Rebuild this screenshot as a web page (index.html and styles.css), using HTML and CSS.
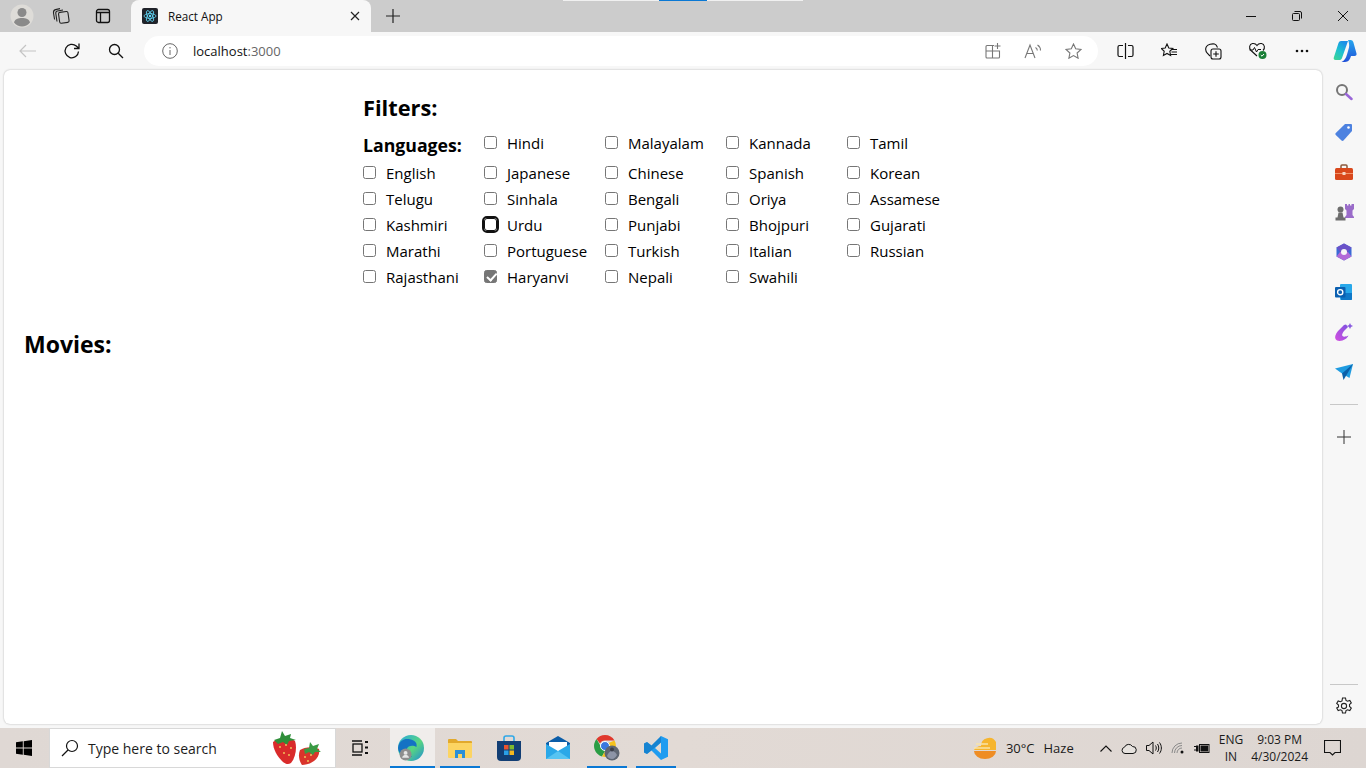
FILE: index.html
```html
<!DOCTYPE html>
<html lang="en">
<head>
    <meta charset="UTF-8">
    <meta name="viewport" content="width=device-width, initial-scale=1.0">
    <title>React App</title>
    <link rel="stylesheet" href="styles.css">
</head>
<body>
    <div class="tabstrip">
        <div class="strip-left">
            <span class="avatar">
                <svg width="24" height="24" viewBox="0 0 24 24"><circle cx="12" cy="12" r="11.500" fill="#dedcd8"/><circle cx="12" cy="8.500" r="4.500" fill="#8a8a8a"/><path d="M4 18.500c1-3.500 4-4.500 8-4.500s7 1 8 4.500c-2 2.500-5 4-8 4s-6-1.500-8-4z" fill="#8a8a8a"/></svg>
            </span>
            <span class="strip-btn">
                <svg width="18" height="18" viewBox="0 0 18 18" fill="none" stroke="#222" stroke-width="1.100"><rect x="7" y="5" width="9.500" height="11" rx="1.500" transform="rotate(-8 11 10)"/><path d="M5 14.500 3.800 6.500C3.600 5 4.300 4.200 5.500 4L11 3"/><path d="M2.600 12.500 1.500 6C1.300 4 2 3 3.500 2.600L8 1.600"/></svg>
            </span>
            <span class="strip-btn">
                <svg width="16" height="16" viewBox="0 0 16 16" fill="none" stroke="#111" stroke-width="1.300"><rect x="1.500" y="1.500" width="13" height="13" rx="2"/><path d="M5.500 4.500v10M1.500 4.500h13" /></svg>
            </span>
        </div>
        <div class="tab">
            <svg class="tab-icon" width="16" height="16" viewBox="0 0 16 16" fill="none" stroke="#61dafb" stroke-width=".8"><rect width="16" height="16" rx="2" fill="#20232a" stroke="none"/><ellipse cx="8" cy="8" rx="6" ry="2.400"/><ellipse cx="8" cy="8" rx="6" ry="2.400" transform="rotate(60 8 8)"/><ellipse cx="8" cy="8" rx="6" ry="2.400" transform="rotate(120 8 8)"/><circle cx="8" cy="8" r="1.200" fill="#61dafb" stroke="none"/></svg>
            <span class="tab-title">React App</span>
            <svg class="tab-close" width="10" height="10" viewBox="0 0 10 10" stroke="#222" stroke-width="1.200"><path d="M1 1l8 8M9 1l-8 8"/></svg>
        </div>
        <span class="new-tab">
            <svg width="14" height="14" viewBox="0 0 14 14" stroke="#222" stroke-width="1.200"><path d="M7 0v14M0 7h14"/></svg>
        </span>
        <div class="share-bar">
            <span class="share-side"></span>
            <span class="share-mid"></span>
            <span class="share-side"></span>
        </div>
        <div class="win-controls">
            <span class="win-btn"><svg width="10" height="10" viewBox="0 0 10 10" stroke="#111"><path d="M0 5.500h10"/></svg></span>
            <span class="win-btn"><svg width="10" height="10" viewBox="0 0 10 10" fill="none" stroke="#111"><rect x=".5" y="2.500" width="7" height="7" rx="1"/><path d="M2.500 .5h5.500a1.500 1.500 0 0 1 1.500 1.500v5.500"/></svg></span>
            <span class="win-btn"><svg width="10" height="10" viewBox="0 0 10 10" stroke="#111"><path d="M0 0l10 10M10 0 0 10"/></svg></span>
        </div>
    </div>

    <div class="toolbar">
        <span class="tool-btn back">
            <svg width="18" height="14" viewBox="0 0 18 14" fill="none" stroke="#c4c4c4" stroke-width="1.200"><path d="M17 7H1M7 1 1 7l6 6"/></svg>
        </span>
        <span class="tool-btn reload">
            <svg width="18" height="18" viewBox="0 0 18 18" fill="none" stroke="#111" stroke-width="1.300"><path d="M15.500 9.500a6.700 6.700 0 1 1-2.200-5.400L16 6.500M16 1.500v5h-5"/></svg>
        </span>
        <span class="tool-btn search">
            <svg width="16" height="16" viewBox="0 0 16 16" fill="none" stroke="#111" stroke-width="1.300"><circle cx="6.500" cy="6.500" r="5"/><path d="M10.200 10.200 15 15"/></svg>
        </span>
        <div class="addressbar">
            <svg class="info-icon" width="16" height="16" viewBox="0 0 16 16" fill="none" stroke="#666" stroke-width="1"><circle cx="8" cy="8" r="7.300"/><path d="M8 7v5M8 4v1.400"/></svg>
            <span class="url">localhost<span class="url-port">:3000</span></span>
            <div class="address-icons">
                <svg width="16" height="16" viewBox="0 0 16 16" fill="none" stroke="#777" stroke-width="1.100"><path d="M9 2.500H2a1 1 0 0 0-1 1V14a1 1 0 0 0 1 1h11.500a1 1 0 0 0 1-1V8H1M7.500 2.500V15M12.500 0v6M9.500 3h6"/></svg>
                <svg width="18" height="16" viewBox="0 0 18 16" fill="none" stroke="#777" stroke-width="1.100"><path d="M1 15 6 2l5 13M2.800 10.500h6.400M11.500 4.500c1.300.8 1.800 2 1.800 3M13.500 2c2 1.200 3 3.200 3 5.500"/></svg>
                <svg width="17" height="16" viewBox="0 0 17 16" fill="none" stroke="#777" stroke-width="1.100"><path d="M8.500 1l2.200 4.800 5.300.6-3.900 3.600 1 5.200-4.600-2.600L3.900 15.200l1-5.200L1 6.400l5.300-.6z"/></svg>
            </div>
        </div>
        <div class="toolbar-icons">
            <span class="tool-btn">
                <svg width="17" height="16" viewBox="0 0 17 16" fill="none" stroke="#111" stroke-width="1.200"><path d="M8.500 0v16M6 2.500H2.500a1.500 1.500 0 0 0-1.500 1.500v8a1.500 1.500 0 0 0 1.500 1.500H6M11 2.500h3.500A1.500 1.500 0 0 1 16 4v8a1.500 1.500 0 0 1-1.500 1.500H11"/></svg>
            </span>
            <span class="tool-btn">
                <svg width="17" height="16" viewBox="0 0 17 16" fill="none" stroke="#111" stroke-width="1.100"><path d="M6 1l1.800 4 4 .5-3 2.800.8 4.200L6 10.400 2.400 12.500l.8-4.200-3-2.800 4-.5zM11 6.500h5M10.500 9h5.500M9.500 11.500H16"/></svg>
            </span>
            <span class="tool-btn">
                <svg width="17" height="17" viewBox="0 0 17 17" fill="none" stroke="#111" stroke-width="1.100"><path d="M5 13 2.500 10.500C.5 8 .5 5 1.500 3.500 3 1.500 7 .5 9.500 1c1.500.3 2.500 2 3 3.500"/><rect x="6" y="6" width="10" height="10" rx="2"/><path d="M11 8.200v5.600M8.200 11h5.600"/></svg>
            </span>
            <span class="tool-btn">
                <svg width="20" height="18" viewBox="0 0 20 18"><path d="M9 14 3 8.500C.5 6 1.500 2 4.500 1.500 6.500 1.200 8 2 9 3.500 10 2 11.500 1.200 13.500 1.500c3 .5 4 4.500 1.500 7" fill="none" stroke="#111" stroke-width="1.100"/><path d="M1.500 8h3.500l1.500-2.500 2 4.500 1.500-2.500h3" fill="none" stroke="#111"/><circle cx="14.500" cy="13" r="4" fill="#1a7f37"/><path d="M12.800 13l1.200 1.200 2-2.200" fill="none" stroke="#fff"/></svg>
            </span>
            <span class="tool-btn">
                <svg width="14" height="4" viewBox="0 0 14 4" fill="#111"><circle cx="2" cy="2" r="1.300"/><circle cx="7" cy="2" r="1.300"/><circle cx="12" cy="2" r="1.300"/></svg>
            </span>
        </div>
        <span class="copilot">
            <svg width="24" height="24" viewBox="0 0 24 24"><defs><linearGradient id="cpA" x1="0" y1="1" x2=".6" y2="0"><stop offset="0" stop-color="#3fd68f"/><stop offset=".55" stop-color="#1cc0d0"/><stop offset="1" stop-color="#1a8fe8"/></linearGradient><linearGradient id="cpB" x1=".5" y1="0" x2=".5" y2="1"><stop offset="0" stop-color="#25a6ee"/><stop offset="1" stop-color="#2050d8"/></linearGradient></defs><path d="M8 2h7L9 19c-.5 1.500-1.500 2-2.500 2H2.500C1 21 .4 19.800 .8 18.500L5.500 4C6 2.800 6.800 2 8 2z" fill="url(#cpA)"/><path d="M15 1h2.500c1.500 0 2.300.8 2.800 2l3.200 11.500c.3 1.200-.3 2.500-2 2.500H18c-.8 3-2.500 6-6 6H8.500c3-1.500 4.500-4 5.500-7.500l2-7c.5-3-.2-5.500-1-7.500z" fill="url(#cpB)"/></svg>
        </span>
    </div>

    <div class="browser-body">
        <main class="page">
            <section class="filters">
                <h2 class="filters-title">Filters:</h2>
                <div class="lang-grid">
                    <h3 class="lang-title">Languages:</h3>
                    <label class="lang first"><input type="checkbox"><span>Hindi</span></label>
                    <label class="lang first"><input type="checkbox"><span>Malayalam</span></label>
                    <label class="lang first"><input type="checkbox"><span>Kannada</span></label>
                    <label class="lang first"><input type="checkbox"><span>Tamil</span></label>
                    <label class="lang"><input type="checkbox"><span>English</span></label>
                    <label class="lang"><input type="checkbox"><span>Japanese</span></label>
                    <label class="lang"><input type="checkbox"><span>Chinese</span></label>
                    <label class="lang"><input type="checkbox"><span>Spanish</span></label>
                    <label class="lang"><input type="checkbox"><span>Korean</span></label>
                    <label class="lang"><input type="checkbox"><span>Telugu</span></label>
                    <label class="lang"><input type="checkbox"><span>Sinhala</span></label>
                    <label class="lang"><input type="checkbox"><span>Bengali</span></label>
                    <label class="lang"><input type="checkbox"><span>Oriya</span></label>
                    <label class="lang"><input type="checkbox"><span>Assamese</span></label>
                    <label class="lang"><input type="checkbox"><span>Kashmiri</span></label>
                    <label class="lang"><input type="checkbox" class="focused"><span>Urdu</span></label>
                    <label class="lang"><input type="checkbox"><span>Punjabi</span></label>
                    <label class="lang"><input type="checkbox"><span>Bhojpuri</span></label>
                    <label class="lang"><input type="checkbox"><span>Gujarati</span></label>
                    <label class="lang"><input type="checkbox"><span>Marathi</span></label>
                    <label class="lang"><input type="checkbox"><span>Portuguese</span></label>
                    <label class="lang"><input type="checkbox"><span>Turkish</span></label>
                    <label class="lang"><input type="checkbox"><span>Italian</span></label>
                    <label class="lang"><input type="checkbox"><span>Russian</span></label>
                    <label class="lang"><input type="checkbox"><span>Rajasthani</span></label>
                    <label class="lang"><input type="checkbox" checked><span>Haryanvi</span></label>
                    <label class="lang"><input type="checkbox"><span>Nepali</span></label>
                    <label class="lang"><input type="checkbox"><span>Swahili</span></label>
                </div>
            </section>
            <h2 class="movies-title">Movies:</h2>
        </main>
        <aside class="sidebar">
            <div class="side-icons">
                <svg width="18" height="18" viewBox="0 0 18 18" fill="none"><circle cx="7" cy="7" r="5" stroke="#757575" stroke-width="2"/><path d="M11 11l5.500 5" stroke="#9a66d8" stroke-width="2.500" stroke-linecap="round"/></svg>
                <svg width="18" height="18" viewBox="0 0 18 18"><path d="M10 1h6a1 1 0 0 1 1 1v6l-8.500 9.500a1.500 1.500 0 0 1-2 0L.8 12a1.500 1.500 0 0 1 0-2z" fill="#4d82e0"/><circle cx="13.500" cy="4.500" r="1.300" fill="#fff"/></svg>
                <svg width="18" height="16" viewBox="0 0 18 16"><path d="M6 4V2a1 1 0 0 1 1-1h4a1 1 0 0 1 1 1v2" fill="none" stroke="#8c5a3c" stroke-width="1.500"/><rect y="4" width="18" height="12" rx="1.500" fill="#d9481c"/><rect y="9" width="18" height="1" fill="#f2956b"/><rect x="7.500" y="8" width="3" height="3" fill="#f6d3c2"/></svg>
                <svg width="19" height="18" viewBox="0 0 19 18"><path d="M10 1h2v1.500h1.500V1h1.500v1.500h1.500V1H19v5l-1.500 1.500V12l1.500 2v1h-9v-1l1.500-2V7.500L10 6z" fill="#9a6cc9"/><circle cx="5.500" cy="6.500" r="3" fill="#6d6d6d"/><path d="M3.500 9.500h4l1 5h2v3H.5v-3h2z" fill="#6d6d6d"/></svg>
                <svg width="18" height="18" viewBox="0 0 18 18"><path d="M9 .5 16.500 4.500v9L9 17.500 1.500 13.500v-9z" fill="#3a6ad6"/><path d="M9 .5 16.500 4.500 13 9H5L1.500 4.500z" fill="#6a52c8"/><path d="M1.500 13.500 9 17.500l7.500-4L13 9H5z" fill="#b26ad8"/><circle cx="9" cy="9" r="3" fill="#f6f6f6"/></svg>
                <svg width="18" height="18" viewBox="0 0 18 18"><rect x="5" y="1" width="12" height="16" rx="1" fill="#28a8ea"/><path d="M6 10h11v6a1 1 0 0 1-1 1H6z" fill="#0f78c8"/><rect x="0" y="4" width="10.500" height="10.500" rx="1" fill="#0a5fb0"/><circle cx="5.200" cy="9.200" r="2.600" fill="none" stroke="#fff" stroke-width="1.400"/></svg>
                <svg width="20" height="20" viewBox="0 0 20 20"><defs><linearGradient id="drA" x1="0" y1="1" x2="1" y2="0"><stop offset="0" stop-color="#d44fe0"/><stop offset="1" stop-color="#7b52e0"/></linearGradient></defs><path d="M10 3 4 9C1.500 12 .5 15 1.500 17c1 2 4 2.500 7 1.500 3-1 5-3 6-5-3 1.500-5 1.500-6 .5-1-1 0-3 1.500-5l4-4-2-2.500z" fill="url(#drA)"/><path d="M16 1l1 2 2 1-2 1-1 2-1-2-2-1 2-1z" fill="#8a5ce0"/></svg>
                <svg width="18" height="16" viewBox="0 0 18 16"><path d="M0 4.500 18 0 14.500 14 7 9.500z" fill="#1f9be0"/><path d="M7 9.500 18 0 8.500 16z" fill="#0b5fa8"/></svg>
            </div>
            <div class="side-line"></div>
            <span class="side-add">
                <svg width="14" height="14" viewBox="0 0 14 14" stroke="#333"><path d="M7 0v14M0 7h14"/></svg>
            </span>
            <div class="side-bottom">
                <div class="side-line"></div>
                <svg class="side-gear" width="18" height="18" viewBox="0 0 18 18" fill="none" stroke="#222" stroke-width="1.100"><circle cx="9" cy="9" r="2.600"/><path d="M7.500 1h3l.5 2.400 1.500.8 2.300-.8 1.500 2.600-1.800 1.600v1.800l1.800 1.600-1.500 2.600-2.300-.8-1.500.8-.5 2.400h-3l-.5-2.400-1.500-.8-2.300.8-1.500-2.600L3.500 9.900V8.100L1.700 6.500 3.200 3.900l2.300.8L7 3.900z"/></svg>
            </div>
        </aside>
    </div>

    <footer class="taskbar">
        <span class="start">
            <svg width="16" height="16" viewBox="0 0 16 16" fill="#000"><path d="M0 2.300 6.800 1.300V7.500H0zM7.700 1.200 16 0V7.500H7.700zM0 8.400H6.800V14.700L0 13.700zM7.700 8.400H16V16L7.700 14.800z"/></svg>
        </span>
        <div class="searchbox">
            <svg width="18" height="18" viewBox="0 0 18 18" fill="none" stroke="#111" stroke-width="1.200"><circle cx="11" cy="7" r="5.500"/><path d="M7 11 1 17"/></svg>
            <span class="search-text">Type here to search</span>
            <svg class="berries" width="52" height="36" viewBox="0 0 52 36"><path d="M2 12c5-4 18-5 22-1 2 6 1 16-4 22-3 2-6 1-9-2C6 26 2 19 2 12z" fill="#d92b2b"/><path d="M3 10l6-2 2-7 3 5 6-2-1 4 6 2-7 1-2 4-4-3-5 2z" fill="#2f8f3a"/><path d="M29 20c4-3 13-4 19-1 1 4-1 9-5 12-4 3-9 4-12 4-3-4-4-10-2-15z" fill="#d9342c"/><path d="M33 19l5-1 1-6 3 4 6-2-2 5 4 3-6 0-2 3-4-3-4 2z" fill="#3a9a44"/><g fill="#f3d060"><circle cx="9" cy="17" r=".9"/><circle cx="15" cy="15" r=".9"/><circle cx="20" cy="18" r=".9"/><circle cx="13" cy="23" r=".9"/><circle cx="18" cy="25" r=".9"/><circle cx="34" cy="27" r=".9"/><circle cx="40" cy="25" r=".9"/><circle cx="37" cy="31" r=".9"/></g></svg>
        </div>
        <span class="task-btn task-view">
            <svg width="18" height="16" viewBox="0 0 18 16" fill="none" stroke="#111" stroke-width="1.300"><path d="M1 1h10M1 15h10"/><rect x="2" y="4" width="9" height="8"/><path d="M14 2h3M14 7.500h3M14 13h3" stroke-width="2"/></svg>
        </span>
        <span class="task-btn edge running">
            <svg width="26" height="26" viewBox="0 0 24 24"><defs><linearGradient id="egA" x1="0" y1="0" x2="1" y2="1"><stop offset="0" stop-color="#2aa8e0"/><stop offset=".55" stop-color="#58d680"/><stop offset="1" stop-color="#1f8ad6"/></linearGradient></defs><circle cx="12" cy="12" r="12" fill="url(#egA)"/><path d="M0 12C1 5 6 3 11 4c5 1 7 4 6 7-3-2-8-1.500-9 2-1 3 1 6 5 7-6 2-12-1-13-8z" fill="#1472c4"/><circle cx="7" cy="18" r="5.500" fill="#8e8e8e"/><circle cx="7" cy="16.500" r="1.800" fill="#e6e6e6"/><path d="M3.800 21c.5-2 2-2.500 3.200-2.500s2.700.5 3.200 2.500z" fill="#e6e6e6"/></svg>
        </span>
        <span class="task-btn running">
            <svg width="24" height="20" viewBox="0 0 24 20"><path d="M0 2a1 1 0 0 1 1-1h7l2 2h13a1 1 0 0 1 1 1v2H0z" fill="#e2a92c"/><path d="M0 5h24v14a1 1 0 0 1-1 1H1a1 1 0 0 1-1-1z" fill="#fcd462"/><path d="M7 12h10v8h-3v-4h-4v4H7z" fill="#2a8fd8"/></svg>
        </span>
        <span class="task-btn">
            <svg width="24" height="26" viewBox="0 0 24 26"><path d="M7 6V3a2 2 0 0 1 2-2h6a2 2 0 0 1 2 2v3" fill="none" stroke="#2fa8e8" stroke-width="1.600"/><path d="M0 6h24v16a4 4 0 0 1-4 4H4a4 4 0 0 1-4-4z" fill="#123e74"/><rect x="7" y="10" width="4.500" height="4.500" fill="#e8532e"/><rect x="12.500" y="10" width="4.500" height="4.500" fill="#7eb92f"/><rect x="7" y="15.500" width="4.500" height="4.500" fill="#2a9fe6"/><rect x="12.500" y="15.500" width="4.500" height="4.500" fill="#f4b71f"/></svg>
        </span>
        <span class="task-btn">
            <svg width="24" height="24" viewBox="0 0 24 24"><path d="M12 0 24 7v2L12 16 0 9V7z" fill="#0b5da8"/><path d="M3 6h18v9H3z" fill="#fff"/><path d="M0 8l12 7 12-7v15H0z" fill="#2aa8e8"/><path d="M0 23l12-8 12 8z" fill="#56c4f2"/></svg>
        </span>
        <span class="task-btn running">
            <svg width="28" height="28" viewBox="0 0 28 28"><path d="M12 1a11 11 0 0 1 9.500 5.500H12a5.500 5.500 0 0 0-5 3L3.500 5A11 11 0 0 1 12 1z" fill="#e0382c"/><path d="M3.500 5 8.300 13.300a5 5 0 0 0 4 3.200L9 22.500A11 11 0 0 1 3.500 5z" fill="#2a9d44"/><path d="M21.500 6.500A11 11 0 0 1 12 23l-3-.5 4.800-8a5 5 0 0 0 .5-5z" fill="#f6c21c"/><circle cx="12" cy="12" r="4.500" fill="#3a78e0" stroke="#fff"/><circle cx="19" cy="19" r="7.500" fill="#5f6672"/><path d="M14 22c1-3 3-5 5-5s4 2 5 4c-1 2-3 4-5 4s-4-1-5-3z" fill="#8d94a6"/><circle cx="19" cy="15.500" r="2" fill="#3c3f4a"/></svg>
        </span>
        <span class="task-btn running">
            <svg width="24" height="24" viewBox="0 0 24 24"><path d="M17 0 24 3.200v17.600L17 24 7.500 14.500 3 18 0 16.500V7.500L3 6l4.500 3.500zM17 6.500 11 12l6 5.500z" fill="#1f9cf0"/><path d="M0 16.500 3 18 17 6.500V0L7.500 9.500 3 6 0 7.500z" fill="#0d6fb8" opacity=".55"/></svg>
        </span>
        <div class="tray">
            <div class="weather">
                <svg width="24" height="24" viewBox="0 0 24 24"><path d="M8 10a8 8 0 0 1 15-4v8H1c1-2 4-4 7-4z" fill="#f6b52e"/><path d="M3 8h12M1 12h16" stroke="#f9e3a8" stroke-width="1.600"/><path d="M1 15h22a11 8 0 0 1-22 0z" fill="#ef8d24"/></svg>
                <span class="temp">30°C</span>
                <span class="haze">Haze</span>
            </div>
            <div class="tray-icons">
                <svg width="12" height="7" viewBox="0 0 12 7" fill="none" stroke="#111" stroke-width="1.100"><path d="M.5 6.500 6 1l5.500 5.500"/></svg>
                <svg width="16" height="11" viewBox="0 0 16 11" fill="#e6e2de" stroke="#111" stroke-width="1"><path d="M4 10.500a3.200 3.200 0 0 1-.5-6.300A4.500 4.500 0 0 1 11.500 3.500a3.500 3.500 0 0 1 .5 7z"/></svg>
                <svg width="16" height="14" viewBox="0 0 16 14" fill="none" stroke="#111" stroke-width="1"><path d="M.5 4.500h2.500L7 1v12L3 9.500H.5zM9.500 4.500c1 1.500 1 3.500 0 5M11.500 3c1.700 2.500 1.700 5.500 0 8M13.500 1.500c2.500 3.500 2.500 7.500 0 11"/></svg>
                <svg width="14" height="12" viewBox="0 0 14 12" fill="none" stroke="#8a8a8a"><path d="M1 11a10 10 0 0 1 10-10M3.500 11A7.500 7.500 0 0 1 11 3.500M6 11a5 5 0 0 1 5-5"/><circle cx="11" cy="10" r="1.500" fill="#111" stroke="none"/></svg>
                <svg width="16" height="9" viewBox="0 0 16 9"><path d="M0 2.500h2M0 6h2" stroke="#111"/><path d="M2 1.500h2.500v6H2z" fill="#111"/><rect x="5.500" y=".5" width="9.500" height="8" fill="none" stroke="#111"/><rect x="6.500" y="1.500" width="7.500" height="6" fill="#111"/></svg>
            </div>
            <div class="lang-box"><span>ENG</span><span>IN</span></div>
            <div class="clock"><span>9:03 PM</span><span>4/30/2024</span></div>
            <span class="notify">
                <svg width="17" height="16" viewBox="0 0 17 16" fill="none" stroke="#111" stroke-width="1.100"><path d="M.5.5h16v12h-5.500L8.500 15 6 12.500H.5z"/></svg>
            </span>
        </div>
    </footer>
</body>
</html>
```

FILE: styles.css
```css
* {
    box-sizing: border-box;
}
html, body {
    height: 100%;
}
body {
    margin: 0;
    width: 1366px;
    height: 768px;
    overflow: hidden;
    display: flex;
    flex-direction: column;
    font-family: "Open Sans", "Noto Sans", Arial, sans-serif;
    background-color: #f7f7f7;
    color: #000;
}
svg {
    display: block;
    flex: none;
}

/* tab strip */
.tabstrip {
    position: relative;
    height: 32px;
    flex: none;
    display: flex;
    background-color: #cccccc;
}
.strip-left {
    display: flex;
    align-items: center;
    width: 131px;
    padding-left: 10px;
}
.avatar {
    width: 24px;
    margin-right: 18px;
}
.strip-btn {
    width: 18px;
    margin-right: 25px;
    display: flex;
    justify-content: center;
}
.tab {
    width: 240px;
    height: 32px;
    display: flex;
    align-items: center;
    padding: 0 11px;
    background-color: #f7f7f7;
    border-radius: 8px 8px 0 0;
}
.tab-title {
    margin-left: 10px;
    font-size: 11.700px;
    flex: 1;
    color: #111;
}
.new-tab {
    display: flex;
    align-items: center;
    margin-left: 15px;
}
.share-bar {
    position: absolute;
    top: 0;
    left: 563px;
    display: flex;
    height: 1px;
}
.share-side {
    width: 96px;
    background-color: #f0f0f0;
}
.share-mid {
    width: 48px;
    background-color: #0a78d4;
}
.win-controls {
    margin-left: auto;
    display: flex;
}
.win-btn {
    width: 46px;
    display: flex;
    align-items: center;
    justify-content: center;
}

/* toolbar */
.toolbar {
    height: 38px;
    flex: none;
    display: flex;
    align-items: center;
    background-color: #f7f7f7;
}
.tool-btn {
    display: flex;
    align-items: center;
    justify-content: center;
    width: 44px;
}
.back {
    margin-left: 6px;
}
.addressbar {
    width: 954px;
    height: 30px;
    margin-left: 6px;
    display: flex;
    align-items: center;
    padding-left: 18px;
    background-color: #fff;
    border-radius: 15px;
}
.url {
    margin-left: 15px;
    font-size: 13px;
    color: #111;
}
.url-port {
    color: #666;
}
.address-icons {
    margin-left: auto;
    display: flex;
    align-items: center;
    gap: 23px;
    padding-right: 16px;
}
.toolbar-icons {
    display: flex;
    margin-left: 5px;
}
.toolbar-icons .tool-btn + .tool-btn {
    margin-left: 0.250px;
}
.copilot {
    margin-left: 9px;
}

/* page area */
.browser-body {
    height: 658px;
    flex: none;
    display: flex;
}
.page {
    width: 1318px;
    height: 654px;
    margin-left: 4px;
    padding: 0 0 0 20px;
    background-color: #fff;
    border-radius: 6px;
    box-shadow: 0 0 2px rgba(0, 0, 0, 0.3);
}
.filters {
    width: 800px;
    margin-left: 339px;
    padding-top: 24px;
}
.filters-title {
    margin: 0 0 8px;
    font-size: 21.800px;
    line-height: 28px;
    font-weight: 700;
}
.lang-grid {
    display: grid;
    grid-template-columns: repeat(5, 121px);
    grid-auto-rows: 26px;
    grid-template-rows: 30px;
}
.lang-title {
    margin: 0;
    font-size: 17.700px;
    line-height: 24px;
    padding-top: 3px;
    font-weight: 700;
    white-space: nowrap;
}
.lang {
    display: flex;
    align-items: center;
    font-size: 15px;
    line-height: 26px;
    white-space: nowrap;
}
.lang.first {
    height: 26px;
    align-self: start;
}
.lang input {
    width: 13px;
    height: 13px;
    margin: 0 10px 2px 0;
    flex: none;
    appearance: none;
    background-color: #fff;
    border: 1px solid #767676;
    border-radius: 2.500px;
    display: block;
    position: relative;
}
.lang input:checked {
    background-color: #767676;
}
.lang input:checked::after {
    content: "";
    position: absolute;
    left: 3.500px;
    top: 0.500px;
    width: 4px;
    height: 7.500px;
    border: solid #fff;
    border-width: 0 2px 2px 0;
    transform: rotate(42deg);
}
.lang input.focused {
    border-color: #111;
    outline: 2px solid #111;
    outline-offset: 0;
    border-radius: 3px;
}
.movies-title {
    margin: 38px 0 0;
    font-size: 23px;
    line-height: 32px;
    font-weight: 700;
}

/* edge sidebar */
.sidebar {
    flex: 1;
    display: flex;
    flex-direction: column;
    align-items: center;
    padding-top: 2px;
}
.side-icons {
    display: grid;
    grid-auto-rows: 40px;
    place-items: center;
}
.side-line {
    width: 28px;
    height: 1px;
    background-color: #c8c8c8;
}
.side-icons + .side-line {
    margin-top: 12px;
}
.side-add {
    margin-top: 25px;
}
.side-bottom {
    margin-top: auto;
    width: 100%;
    display: flex;
    flex-direction: column;
    align-items: center;
    padding-bottom: 13px;
}
.side-gear {
    margin-top: 12px;
}

/* windows taskbar */
.taskbar {
    height: 40px;
    flex: none;
    display: flex;
    align-items: center;
    background: linear-gradient(90deg, #dfd8d4, #e2dad5 50%, #ddd6d2);
}
.start {
    width: 48px;
    margin-right: 1px;
    display: flex;
    justify-content: center;
}
.searchbox {
    width: 287px;
    height: 40px;
    display: flex;
    align-items: center;
    padding-left: 11px;
    background-color: #fff;
    border: 1px solid #d8d8d8;
    overflow: hidden;
}
.search-text {
    margin-left: 9px;
    font-size: 14px;
    color: #1d1d1d;
}
.berries {
    margin-left: auto;
    margin-right: 12px;
}
.task-btn {
    position: relative;
    width: 49px;
    height: 40px;
    display: flex;
    align-items: center;
    justify-content: center;
}
.task-btn.running::after {
    content: "";
    position: absolute;
    left: 5px;
    right: 4px;
    bottom: 0;
    height: 2px;
    background-color: #0a78d4;
}
.task-view {
    width: 54px;
    justify-content: flex-start;
    padding-left: 15px;
}
.task-btn.edge {
    width: 45px;
    padding-right: 3px;
    background-color: #f0edeb;
}
.task-btn.edge::after {
    left: 0;
    right: 0;
}
.tray {
    margin-left: auto;
    display: flex;
    align-items: center;
    font-size: 13px;
    color: #1a1a1a;
}
.weather {
    display: flex;
    align-items: center;
}
.temp {
    margin-left: 9px;
}
.haze {
    margin-left: 9px;
}
.tray-icons {
    display: flex;
    align-items: center;
    gap: 9px;
    margin-left: 26px;
}
.lang-box,
.clock {
    display: flex;
    flex-direction: column;
    align-items: center;
    font-size: 12px;
    line-height: 17px;
}
.lang-box {
    margin-left: 9px;
}
.clock {
    margin-left: 8px;
}
.notify {
    margin: 0 25px 0 16px;
}
```
